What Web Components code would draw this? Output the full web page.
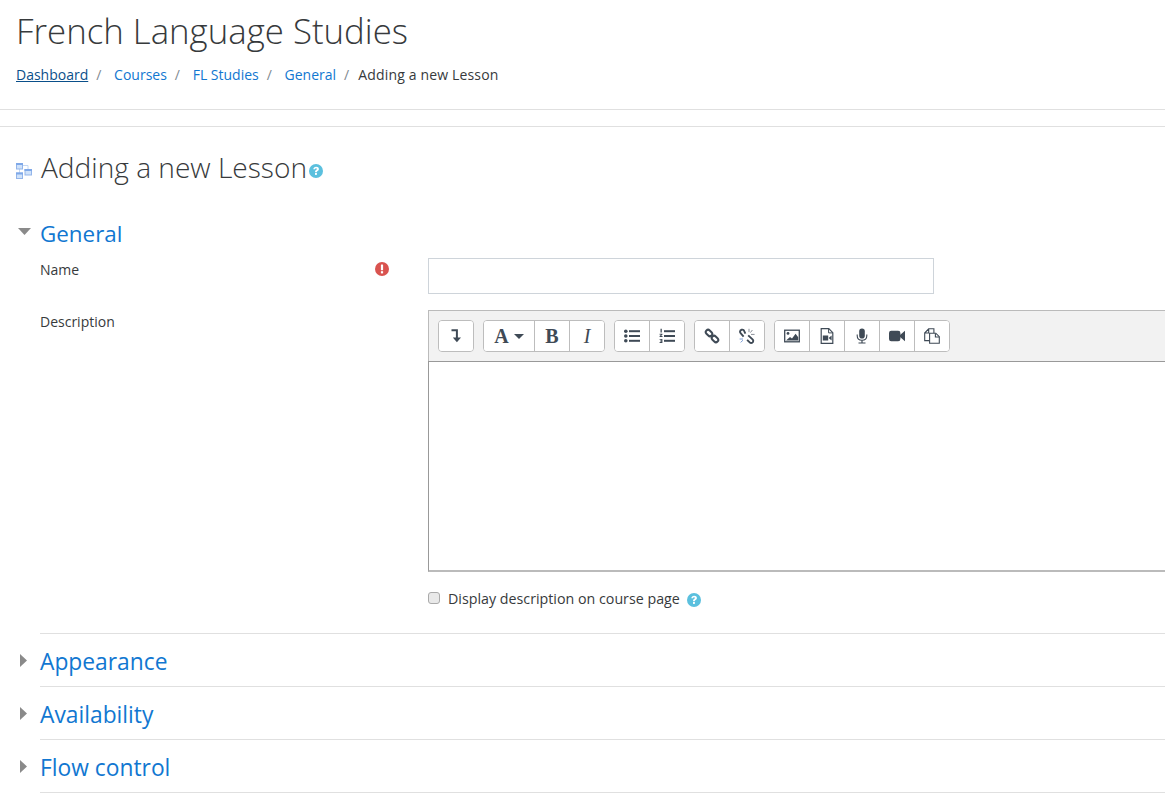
<!DOCTYPE html>
<html>
<head>
<meta charset="utf-8">
<title>Adding a new Lesson</title>
<style>
html, body { margin: 0; height: 100%; overflow: hidden; background: #fff; }
body { font-family: "Open Sans", "Liberation Sans", sans-serif; font-size: 14px; color: #373a3c; }
</style>
</head>
<body>

<page-header></page-header>
<activity-title>Adding a new Lesson</activity-title>

<form-section name="General" open>
  <form-row label="Name" required height="52">
    <text-field></text-field>
  </form-row>
  <form-row label="Description">
    <atto-editor></atto-editor>
    <check-row>Display description on course page</check-row>
  </form-row>
</form-section>
<form-section name="Appearance"></form-section>
<form-section name="Availability"></form-section>
<form-section name="Flow control"></form-section>

<script>
const HELP = `<svg width="14" height="14" viewBox="0 0 14 14"><circle cx="7" cy="7" r="7" fill="#5bc0de"/><path d="M4.3 5.3C4.4 3.6 5.6 2.7 7.1 2.7c1.6 0 2.8.9 2.8 2.3 0 1.1-.6 1.6-1.3 2-.5.3-.7.6-.7 1.2H6c0-1.1.3-1.6 1-2.1.6-.4.9-.6.9-1 0-.5-.3-.8-.9-.8-.6 0-.9.3-1 1z" fill="#fff"/><rect x="6" y="9" width="1.9" height="1.9" fill="#fff"/></svg>`

class PageHeader extends HTMLElement {
    connectedCallback() {
        this.attachShadow({mode: 'open'})
        this.shadowRoot.innerHTML = `<style>
        :host { display: block; height: 109px; border-bottom: 1px solid #e0e0e0; padding-left: 16px; }
        h1 { margin: 0; padding: 8px 0 0 0; font-size: 34.8px; line-height: 46px; font-weight: 300; color: #373a3c; white-space: nowrap; }
        nav { display: flex; margin-top: 9px; font-size: 14px; line-height: 24px; white-space: nowrap; }
        a { color: #1177d1; text-decoration: none; }
        a.dash { color: #0a4f8a; text-decoration: underline; }
        i { font-style: normal; color: #818a91; padding: 0 12.7px 0 8px; }
        i.last { padding-right: 9px; padding-left: 8px; }
        span { letter-spacing: .16px; }
        </style>
        <h1>French Language Studies</h1>
        <nav>
            <a class="dash" href="#">Dashboard</a><i>/</i>
            <a href="#">Courses</a><i>/</i>
            <a href="#">FL Studies</a><i>/</i>
            <a href="#">General</a><i class="last">/</i>
            <span>Adding a new Lesson</span>
        </nav>`
    }
}

class ActivityTitle extends HTMLElement {
    connectedCallback() {
        this.attachShadow({mode: 'open'})
        this.shadowRoot.innerHTML = `<style>
        :host { display: block; margin-top: 16px; border-top: 1px solid #e0e0e0; padding: 20px 0 0 16px; }
        div { display: flex; align-items: center; height: 40px; }
        svg.mod { margin-right: 9px; margin-top: 8px; }
        h2 { margin: 0; font-size: 28.1px; font-weight: 300; line-height: 40px; color: #373a3c; white-space: nowrap; }
        span { display: flex; margin: 8px 0 0 2px; }
        </style>
        <div>
            <svg class="mod" width="16" height="16" viewBox="0 0 16 16">
                <path d="M3.5 6v4M7 2.5h5v4" fill="none" stroke="#c4d8f4"/>
                <g fill="#cfe2fa" stroke="#93b5ea">
                    <rect x="0.5" y="0.5" width="6" height="5.5"/>
                    <rect x="0.5" y="10" width="6" height="5.5"/>
                    <rect x="9" y="6.5" width="6.5" height="5.5"/>
                </g>
                <g fill="#7fa8e8">
                    <rect x="0" y="0" width="7" height="2"/>
                    <rect x="0" y="9.5" width="7" height="2"/>
                    <rect x="8.5" y="6" width="7.5" height="2"/>
                </g>
            </svg>
            <h2><slot></slot></h2>
            <span>${HELP}</span>
        </div>`
    }
}

class FormSection extends HTMLElement {
    connectedCallback() {
        const open = this.hasAttribute('open')
        this.attachShadow({mode: 'open'})
        const arrow = open
            ? `<svg width="13" height="7" viewBox="0 0 13 7"><path d="M0 0h13L6.5 7z" fill="#8a8a8a"/></svg>`
            : `<svg width="7" height="13" viewBox="0 0 7 13"><path d="M0 0l7 6.5L0 13z" fill="#8a8a8a"/></svg>`
        this.shadowRoot.innerHTML = `<style>
        :host { display: block; position: relative; padding-left: 40px; }
        :host([open]) { margin-top: 29px; }
        .rule { border-bottom: 1px solid #e0e0e0; }
        :host(:not([open])) .rule { height: 53px; box-sizing: border-box; }
        h3 { margin: 0 0 6px; font-size: 22.4px; font-weight: 400; line-height: 36px; color: #1177d1; white-space: nowrap; }
        :host(:not([open])) h3 { margin: 0; padding-top: 10px; font-size: 22.8px; }
        svg { position: absolute; }
        :host([open]) svg { left: 18px; top: 12px; }
        :host(:not([open])) svg { left: 20px; top: 20px; }
        </style>
        <div class="rule">
            ${arrow}
            <h3>${this.getAttribute('name')}</h3>
            <slot></slot>
        </div>`
    }
}

class FormRow extends HTMLElement {
    connectedCallback() {
        this.attachShadow({mode: 'open'})
        const req = this.hasAttribute('required')
            ? `<svg class="req" width="14" height="14" viewBox="0 0 14 14"><circle cx="7" cy="7" r="7" fill="#d9534f"/><rect x="5.9" y="2.6" width="2.2" height="5.6" rx=".4" fill="#fff"/><rect x="5.9" y="9.2" width="2.2" height="2.2" fill="#fff"/></svg>`
            : ''
        this.shadowRoot.innerHTML = `<style>
        :host { display: grid; grid-template-columns: 388px 1fr; min-height: ${this.getAttribute('height') || 0}px; }
        .label { position: relative; font-size: 14px; line-height: 24px; }
        .req { position: absolute; left: 335px; top: 4px; }
        .field { min-width: 0; }
        </style>
        <div class="label">${this.getAttribute('label')}${req}</div>
        <div class="field"><slot></slot></div>`
    }
}

class TextField extends HTMLElement {
    connectedCallback() {
        this.attachShadow({mode: 'open'})
        this.shadowRoot.innerHTML = `<style>
        :host { display: block; }
        input { display: block; width: 506px; height: 36px; box-sizing: border-box; border: 1px solid #ced4da; background: #fff; outline: 0; padding: 0 8px; }
        </style>
        <input type="text">`
    }
}

// toolbar icons, drawn on a 16 box
const ICONS = {
    collapse: `<path d="M3.5 2.2h5.4v8" fill="none" stroke="#3f4a56" stroke-width="2"/><path d="M4.8 9.6h8.2l-4.1 4.6z" fill="#3f4a56"/>`,
    ul: `<g fill="#3f4a56"><circle cx="1.8" cy="3.2" r="1.8"/><circle cx="1.8" cy="8" r="1.8"/><circle cx="1.8" cy="12.8" r="1.8"/><rect x="5" y="2.2" width="11" height="2"/><rect x="5" y="7" width="11" height="2"/><rect x="5" y="11.8" width="11" height="2"/></g>`,
    ol: `<g fill="#3f4a56"><rect x="5" y="2.2" width="11" height="2"/><rect x="5" y="7" width="11" height="2"/><rect x="5" y="11.8" width="11" height="2"/><path d="M1.5 .8h1.3v3.6H1.5zM.6 5.8h2.8v1L2 8.1h1.5v1H.6v-1l1.6-1.4H.6zM.6 10.9h2.8v4H.6V14h1.7v-.6H1.1v-.8h1.2v-.8H.6z"/></g>`,
    link: `<g fill="none" stroke="#3f4a56" stroke-width="2"><rect x="-3.6" y="-2.3" width="7.2" height="4.6" rx="2.3" transform="translate(5 5) rotate(45)"/><rect x="-3.6" y="-2.3" width="7.2" height="4.6" rx="2.3" transform="translate(11 11) rotate(45)"/></g>`,
    unlink: `<g fill="none" stroke="#3f4a56" stroke-width="1.9"><path d="M6.4 5.6L4.9 2.4C3.7 1 1.2 1.7 1 3.6c0 .7.2 1.2.6 1.6l3 3.4"/><path d="M9.2 7.4l4.6 4.2c1.1 1.4 .1 3.4-1.6 3.4-.6 0-1.1-.2-1.5-.6l-2.6-2.6"/></g><g stroke="#8a9099" stroke-width="1"><path d="M10 .8v3.4M13.4 2L11.4 4.6M15.6 6.4H12"/></g><g stroke="#7f9fd6" stroke-width="1"><path d="M.6 11h3.4M1.6 14.4L4 12.2"/></g>`,
    image: `<rect x=".7" y="2.2" width="14.6" height="11.6" fill="#fff" stroke="#3f4a56" stroke-width="1.3"/><circle cx="4" cy="5.4" r="1.4" fill="#3f4a56"/><path d="M2 12.6l4-3.6 2 1.6 3.6-4.8 2.6 3.4v3.4z" fill="#3f4a56"/>`,
    media: `<path d="M2.2.7h7.6l4 4v10.6H2.2z" fill="#fff" stroke="#3f4a56" stroke-width="1.2"/><path d="M9.6.9v4h4" fill="none" stroke="#3f4a56" stroke-width="1"/><rect x="3.8" y="7.5" width="5.4" height="5" fill="#3f4a56"/><path d="M9.6 10l3-2.4v4.8z" fill="#3f4a56"/>`,
    mic: `<rect x="5.2" y="0.6" width="5.6" height="10" rx="2.8" fill="#3f4a56"/><path d="M3.2 6.5v1.3c0 2.6 2 4.5 4.8 4.5s4.8-1.9 4.8-4.5V6.5" fill="none" stroke="#3f4a56" stroke-width="1.1"/><path d="M8 12.3v2.3M4.5 15h7" stroke="#3f4a56" stroke-width="1.2"/>`,
    video: `<rect x="0" y="2.8" width="11.4" height="10.4" rx="2.2" fill="#3f4a56"/><path d="M11 7l5-4.2v10.4L11 9z" fill="#3f4a56"/>`,
    paste: `<g fill="#fff" stroke="#3f4a56" stroke-width="1.1"><path d="M.7 5L4.7.8h5.2v4.4M5.6 12.6H.7V5h4V.8"/><path d="M5.6 5.2h6.2l3.5 3.5v6.6H5.6z"/><path d="M11.4 5.4v3.6h3.8" fill="none"/></g>`,
}

class AttoButton extends HTMLElement {
    connectedCallback() {
        const icon = this.getAttribute('icon')
        this.attachShadow({mode: 'open'})
        this.shadowRoot.innerHTML = `<style>
        :host { display: flex; align-items: center; justify-content: center; gap: 5px; width: 34px; height: 30px; border-left: 1px solid #bdbdbd; background: #fff; font: 400 20px/30px "Liberation Serif", serif; color: #3f4a56; }
        :host(:first-child) { border-left: 0; }
        :host([icon=font]) { width: 50px; font-weight: 700; }
        :host([icon=bold]) { font-weight: 700; }
        :host([icon=italic]) { font-style: italic; }
        </style>
        <slot></slot>${ICONS[icon] ? `<svg width="16" height="16" viewBox="0 0 16 16">${ICONS[icon]}</svg>` : ''}${icon == 'font' ? `<svg width="10" height="5" viewBox="0 0 10 5"><path d="M0 0h10L5 5z" fill="#3f4a56"/></svg>` : ''}`
    }
}

class AttoGroup extends HTMLElement {
    connectedCallback() {
        this.attachShadow({mode: 'open'})
        this.shadowRoot.innerHTML = `<style>
        :host { display: flex; border: 1px solid #bdbdbd; border-radius: 4px; overflow: hidden; background: #fff; }
        </style>
        <slot></slot>`
    }
}

class AttoEditor extends HTMLElement {
    connectedCallback() {
        this.attachShadow({mode: 'open'})
        this.shadowRoot.innerHTML = `<style>
        :host { display: block; margin-right: -20px; }
        .bar { display: flex; gap: 9px; height: 51px; box-sizing: border-box; padding: 9px 9px; background: #f2f2f2; border: 1px solid #bbb; border-bottom: 0; }
        .area { height: 211px; box-sizing: border-box; border: 1px solid #999; border-bottom: 2px solid #bbb; background: #fff; }
        </style>
        <div class="bar">
            <atto-group><atto-button icon="collapse"></atto-button></atto-group>
            <atto-group><atto-button icon="font">A</atto-button><atto-button icon="bold">B</atto-button><atto-button icon="italic">I</atto-button></atto-group>
            <atto-group><atto-button icon="ul"></atto-button><atto-button icon="ol"></atto-button></atto-group>
            <atto-group><atto-button icon="link"></atto-button><atto-button icon="unlink"></atto-button></atto-group>
            <atto-group><atto-button icon="image"></atto-button><atto-button icon="media"></atto-button><atto-button icon="mic"></atto-button><atto-button icon="video"></atto-button><atto-button icon="paste"></atto-button></atto-group>
        </div>
        <div class="area"></div>`
    }
}

class CheckRow extends HTMLElement {
    connectedCallback() {
        this.attachShadow({mode: 'open'})
        this.shadowRoot.innerHTML = `<style>
        :host { display: flex; align-items: center; height: 24px; margin: 14px 0 23px; font-size: 14.25px; white-space: nowrap; }
        .box { width: 12px; height: 12px; box-sizing: border-box; border: 1px solid #aaa; border-radius: 3px; background: #e9e9e9; margin-right: 8px; }
        span { display: flex; margin-left: 7px; margin-top: 3px; }
        </style>
        <div class="box"></div><slot></slot><span>${HELP}</span>`
    }
}

customElements.define('page-header', PageHeader)
customElements.define('activity-title', ActivityTitle)
customElements.define('form-section', FormSection)
customElements.define('form-row', FormRow)
customElements.define('text-field', TextField)
customElements.define('atto-button', AttoButton)
customElements.define('atto-group', AttoGroup)
customElements.define('atto-editor', AttoEditor)
customElements.define('check-row', CheckRow)
</script>
</body>
</html>
